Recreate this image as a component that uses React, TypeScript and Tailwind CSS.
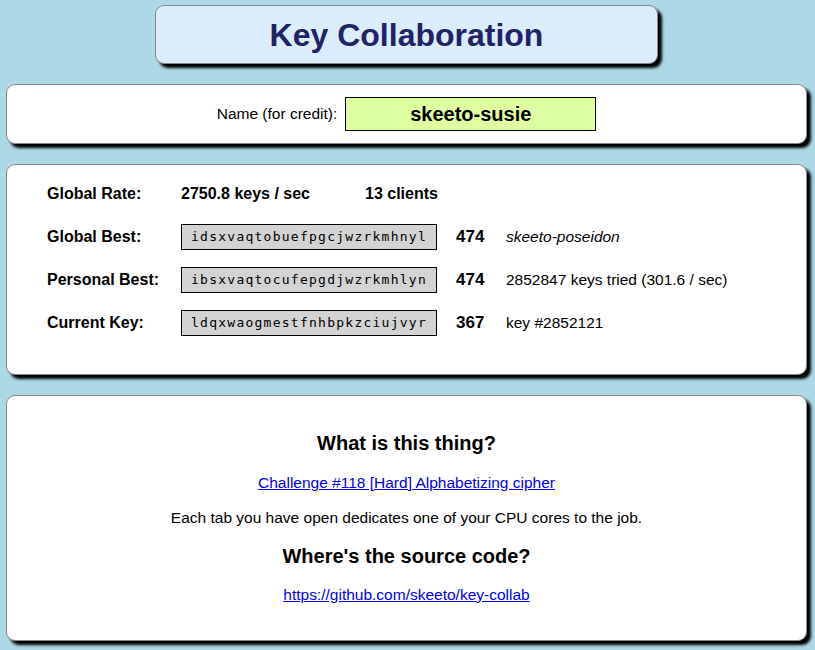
export default function App() {
  const rows = [
    { label: "Global Best:", key: "idsxvaqtobuefpgcjwzrkmhnyl", score: "474", extra: "skeeto-poseidon", italic: true },
    { label: "Personal Best:", key: "ibsxvaqtocufepgdjwzrkmhlyn", score: "474", extra: "2852847 keys tried (301.6 / sec)", italic: false },
    { label: "Current Key:", key: "ldqxwaogmestfnhbpkzciujvyr", score: "367", extra: "key #2852121", italic: false },
  ];

  return (
    <div className="min-h-[650px] bg-[#add8e6] pl-[6px] pr-[8px] pt-[5px] pb-[10px] font-['Liberation_Sans',Arial,sans-serif] text-black">
      {/* title */}
      <div className="mx-auto flex h-[59px] w-[503px] items-center justify-center rounded-[9px] border border-[#888] bg-[#dbedfd] shadow-[4px_4px_3px_#000]">
        <h1 className="text-[32px] font-bold text-[#222266]">Key Collaboration</h1>
      </div>

      {/* name */}
      <div className="mt-[20px] flex h-[60px] items-center justify-center gap-[8px] rounded-[9px] border border-[#888] bg-white shadow-[4px_4px_3px_#000]">
        <span className="text-[15.5px]">Name (for credit):</span>
        <div className="flex h-[34px] w-[251px] items-center justify-center border border-black bg-[#ddffa0] text-[20px] font-bold">
          skeeto-susie
        </div>
      </div>

      {/* stats */}
      <div className="mt-[20px] flex flex-col gap-[17px] rounded-[9px] border border-[#888] bg-white pt-[16px] pb-[38px] pl-[40px] shadow-[4px_4px_3px_#000]">
        <div className="flex h-[26px] items-center text-[16px] font-bold">
          <span className="w-[134px]">Global Rate:</span>
          <span className="w-[184px]">2750.8 keys / sec</span>
          <span>13 clients</span>
        </div>
        {rows.map((r) => (
          <div key={r.label} className="flex h-[26px] items-center">
            <span className="w-[134px] text-[16px] font-bold">{r.label}</span>
            <div className="flex h-[26px] w-[256px] items-center border border-black bg-[#d3d3d3] pl-[9px] font-['DejaVu_Sans_Mono',monospace] text-[13px] tracking-[1.25px]">
              {r.key}
            </div>
            <span className="ml-[19px] w-[50px] text-[17px] font-bold">{r.score}</span>
            <span className={"text-[15.5px]" + (r.italic ? " italic" : "")}>{r.extra}</span>
          </div>
        ))}
      </div>

      {/* info */}
      <div className="mt-[20px] flex h-[246px] flex-col items-center rounded-[9px] border border-[#888] bg-white pt-[32px] shadow-[4px_4px_3px_#000]">
        <h2 className="text-[20px] font-bold">What is this thing?</h2>
        <a href="#" className="mt-[13px] text-[15.5px] text-[#0000ee] underline">
          Challenge #118 [Hard] Alphabetizing cipher
        </a>
        <p className="mt-[12px] text-[15.5px]">Each tab you have open dedicates one of your CPU cores to the job.</p>
        <h2 className="mt-[11px] text-[20px] font-bold">Where's the source code?</h2>
        <a href="#" className="mt-[12px] text-[15.5px] text-[#0000ee] underline">
          https://github.com/skeeto/key-collab
        </a>
      </div>
    </div>
  );
}
